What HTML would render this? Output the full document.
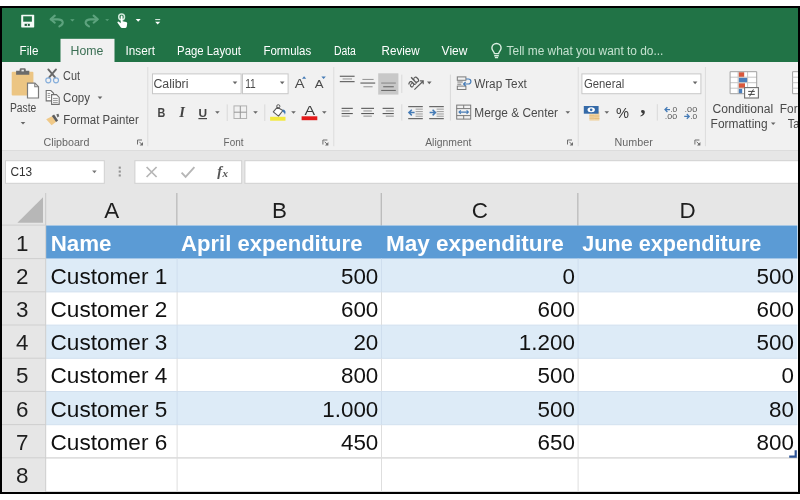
<!DOCTYPE html>
<html lang="en">
<head>
<meta charset="utf-8">
<title>Excel - customer expenditure</title>
<style>
html,body{margin:0;padding:0;width:800px;height:500px;overflow:hidden;background:#fff}
svg{display:block;position:absolute;left:0;top:0;will-change:transform}
text{font-family:"Liberation Sans", sans-serif;white-space:pre}
</style>
</head>
<body>
<svg width="800" height="500" viewBox="0 0 800 500">
<!-- title bar + tabs -->
<rect x="0" y="6" width="800" height="56" fill="#217346"/>
<rect x="60.5" y="38.8" width="54" height="24" fill="#f1f1f1"/>
<text x="19.6" y="55" font-size="12" fill="#fff" textLength="18.8" lengthAdjust="spacingAndGlyphs">File</text>
<text x="70.6" y="55" font-size="12" fill="#3b6f54" textLength="32.8" lengthAdjust="spacingAndGlyphs">Home</text>
<text x="125.6" y="55" font-size="12" fill="#fff" textLength="29.3" lengthAdjust="spacingAndGlyphs">Insert</text>
<text x="177.1" y="55" font-size="12" fill="#fff" textLength="63.8" lengthAdjust="spacingAndGlyphs">Page Layout</text>
<text x="263.4" y="55" font-size="12" fill="#fff" textLength="47.8" lengthAdjust="spacingAndGlyphs">Formulas</text>
<text x="333.9" y="55" font-size="12" fill="#fff" textLength="22.0" lengthAdjust="spacingAndGlyphs">Data</text>
<text x="381.6" y="55" font-size="12" fill="#fff" textLength="38.1" lengthAdjust="spacingAndGlyphs">Review</text>
<text x="441.6" y="55" font-size="12" fill="#fff" textLength="25.8" lengthAdjust="spacingAndGlyphs">View</text>
<text x="506.6" y="55" font-size="12" fill="#c4e1cf" textLength="156.8" lengthAdjust="spacingAndGlyphs">Tell me what you want to do...</text>
<g fill="none" stroke="#dcefe3" stroke-width="1.4"><path d="M494.4 53.6c0-1.8-2.5-2.9-2.5-5.5a4.6 4.6 0 0 1 9.2 0c0 2.6-2.5 3.7-2.5 5.5z"/><path d="M494.2 55.7h4.6M494.9 57.6h3.2"/></g>
<g><rect x="21.2" y="14.8" width="13" height="12.6" rx="0.6" fill="#f4fbf7"/><rect x="23.2" y="16.3" width="8.7" height="5.4" fill="#217346"/><rect x="24.6" y="23.8" width="5.2" height="2.1" fill="#1d5c3a"/><rect x="26.9" y="23.8" width="0.9" height="2.1" fill="#f4fbf7"/></g>
<g fill="none" stroke="#5da37e" stroke-width="2.1" stroke-linecap="round" stroke-linejoin="round"><path d="M54.8 15.6l-4.2 3.7 4.2 3.4"/><path d="M51.2 19.4h6.6c4.6 0 7.6 3.6 1.6 7"/></g>
<path d="M70.2 19.3h4.4l-2.2 2.2z" fill="#5da37e"/>
<g fill="none" stroke="#5da37e" stroke-width="2.1" stroke-linecap="round" stroke-linejoin="round"><path d="M93.6 15.6l4.2 3.7-4.2 3.4"/><path d="M97.2 19.4h-6.6c-4.6 0-7.6 3.6-1.6 7"/></g>
<path d="M105.2 19.3h4l-2 1.8z" fill="#5da37e"/>
<g fill="#fff"><circle cx="121.6" cy="16.9" r="2.9" fill="none" stroke="#cfe8d9" stroke-width="1.5"/><path d="M120.7 16.4a0.95 0.95 0 0 1 1.9 0v4.9l3.5 0.8a1.4 1.4 0 0 1 1.1 1.5l-0.5 3.2a1.3 1.3 0 0 1-1.3 1.1h-3.4a1.6 1.6 0 0 1-1.3-0.7l-3.2-4.4a0.9 0.9 0 0 1 1.4-1.1l1.8 1.6z"/></g>
<path d="M135.7 19h5l-2.5 2.7z" fill="#fff"/>
<rect x="155.2" y="19.1" width="5" height="1" fill="#e4f1ea"/>
<path d="M155.2 21.8h5l-2.5 2.7z" fill="#fff"/>
<!-- ribbon -->
<rect x="0" y="62" width="800" height="88.6" fill="#f1f1f1"/>
<rect x="0" y="150" width="800" height="1" fill="#dcdcdc"/>
<g><!-- paste -->
<rect x="11.7" y="71.7" width="21.7" height="23.8" rx="1" fill="#ecc583"/>
<path d="M16.1 74.7v-4h3.5v-1a1.4 1.4 0 0 1 1.4-1.4h3.4a1.4 1.4 0 0 1 1.4 1.4v1h3.5v4z" fill="#6b6b6b"/>
<rect x="21.5" y="69.7" width="2.4" height="1.7" fill="#e9e9e9"/>
<path d="M27.5 83.1h7.4l3.6 3.6v11.3h-11z" fill="#fff" stroke="#7a7a7a" stroke-width="1.2"/>
<path d="M34.8 83.2v3.6h3.6" fill="none" stroke="#7a7a7a" stroke-width="1.1"/>
</g>
<text x="9.9" y="112.4" font-size="12" fill="#4a4a4a" textLength="26.4" lengthAdjust="spacingAndGlyphs">Paste</text>
<path d="M20.7 122h4.6l-2.3 2.6z" fill="#666"/>
<g fill="none"><path d="M48.3 69.4l6.8 8M56 69.4l-6.8 8" stroke="#686868" stroke-width="1.9" stroke-linecap="round"/><circle cx="48.3" cy="80.3" r="2.5" stroke="#86aedb" stroke-width="1.2"/><circle cx="56" cy="80.3" r="2.5" stroke="#86aedb" stroke-width="1.2"/></g>
<text x="63.1" y="80.3" font-size="12" fill="#4a4a4a" textLength="16.9" lengthAdjust="spacingAndGlyphs">Cut</text>
<g fill="#fff" stroke="#707070" stroke-width="1.1"><path d="M46.2 90.5h4.6l2.8 2.8v7.6h-7.4z"/><path d="M51.6 94.6h4.8l2.8 2.8v7h-7.6z"/></g>
<g stroke="#8a8a8a" stroke-width="0.9"><path d="M47.6 93.4h2.6M47.6 95.4h2.6M47.6 97.4h2.6M53 98.4h4.8M53 100.4h4.8M53 102.4h4.8"/></g>
<text x="63.1" y="102.3" font-size="12" fill="#4a4a4a" textLength="26.8" lengthAdjust="spacingAndGlyphs">Copy</text>
<path d="M97.7 96.6h4.6l-2.3 2.6z" fill="#666"/>
<g><path d="M46.2 119.2l5.8-3 4.2 5.6-4.6 3.5z" fill="#f0c988"/><path d="M51.8 115.9l2.3-1.3 4 5.8-2 1.5z" fill="#5c5c5c"/><path d="M56.3 114.3l2.2-0.6 0.8 2.6-1.9 1.1z" fill="#6a6a6a"/></g>
<text x="63.2" y="124.2" font-size="12" fill="#4a4a4a" textLength="75.6" lengthAdjust="spacingAndGlyphs">Format Painter</text>
<text x="43.6" y="146" font-size="11.5" fill="#666" textLength="45.8" lengthAdjust="spacingAndGlyphs">Clipboard</text>
<g stroke="#6e6e6e" stroke-width="1" fill="none"><path d="M142 140H137.5V144.5"/><path d="M139.2 141.7L142 144.5"/><path d="M143 142.1V145.5H139.6Z" fill="#6e6e6e" stroke="none"/></g>
<rect x="147.3" y="67" width="1" height="79.2" fill="#dcdcdc"/>
<rect x="152.5" y="73.9" width="88.6" height="19.8" fill="#fff" stroke="#c8c8c8"/>
<rect x="242.5" y="73.9" width="45.6" height="19.8" fill="#fff" stroke="#c8c8c8"/>
<text x="153.4" y="88" font-size="12" fill="#4a4a4a" textLength="35.0" lengthAdjust="spacingAndGlyphs">Calibri</text>
<path d="M232.7 81.6h4.6l-2.3 2.6z" fill="#666"/>
<text x="245.2" y="88" font-size="12" fill="#4a4a4a" textLength="10.6" lengthAdjust="spacingAndGlyphs">11</text>
<path d="M279.9 81.6h4.6l-2.3 2.6z" fill="#666"/>
<text x="294.8" y="88.4" font-size="12.5" fill="#4a4a4a" textLength="9.8" lengthAdjust="spacingAndGlyphs">A</text>
<path d="M302 78.8l2.1-2.6 2.1 2.6z" fill="#457bb6"/>
<text x="314.8" y="88.4" font-size="10.5" fill="#4a4a4a" textLength="8.8" lengthAdjust="spacingAndGlyphs">A</text>
<path d="M321.4 76.4h4.4l-2.2 2.6z" fill="#457bb6"/>
<text x="157.4" y="117.3" font-size="12.5" fill="#444" font-weight="700" textLength="7.8" lengthAdjust="spacingAndGlyphs">B</text>
<text x="179.2" y="117.4" font-size="14.5" fill="#444" font-weight="700" font-style="italic" style='font-family:"Liberation Serif",serif'>I</text>
<text x="198.4" y="116.9" font-size="11.5" fill="#444" font-weight="700" textLength="8.6" lengthAdjust="spacingAndGlyphs">U</text>
<rect x="198.4" y="118" width="8.6" height="1.2" fill="#444"/>
<path d="M215.1 111.2h4.6l-2.3 2.6z" fill="#666"/>
<rect x="226.7" y="104.4" width="1" height="16.6" fill="#d9d9d9"/>
<g fill="none"><rect x="234" y="105.9" width="12.6" height="12.6" stroke="#b2b2b2" stroke-width="1"/><path d="M240.3 106v12.4M234 112.2h12.6" stroke="#969696" stroke-width="1"/></g>
<path d="M253.2 111.2h4.6l-2.3 2.6z" fill="#666"/>
<rect x="264.3" y="104.4" width="1" height="16.6" fill="#d9d9d9"/>
<g><path d="M273.3 111.8l3.9-4.5 5.7 3.2-4.4 5.7z" fill="#fff" stroke="#5a5a5a" stroke-width="1.1" stroke-linejoin="round"/><circle cx="278.3" cy="106.3" r="1.6" fill="none" stroke="#5a5a5a" stroke-width="1"/><path d="M282.9 109.6c2.6 0.4 3.4 2.6 2 5.2c-0.4-1.6-1.2-2.6-2.8-3.2z" fill="#3f78b5"/></g>
<rect x="270.1" y="116.8" width="15.4" height="3.9" fill="#f2e93c"/>
<path d="M291.2 111.2h4.6l-2.3 2.6z" fill="#666"/>
<text x="304.6" y="114.9" font-size="13" fill="#3b3b3b" textLength="10.6" lengthAdjust="spacingAndGlyphs">A</text>
<rect x="301.6" y="116.3" width="15.7" height="3.9" fill="#e31a1a"/>
<path d="M322 111.2h4.6l-2.3 2.6z" fill="#666"/>
<text x="223.6" y="146" font-size="11.5" fill="#666" textLength="19.8" lengthAdjust="spacingAndGlyphs">Font</text>
<g stroke="#6e6e6e" stroke-width="1" fill="none"><path d="M327.4 140H322.9V144.5"/><path d="M324.6 141.7L327.4 144.5"/><path d="M328.4 142.1V145.5H325Z" fill="#6e6e6e" stroke="none"/></g>
<rect x="333.3" y="67" width="1" height="79.2" fill="#dcdcdc"/>
<rect x="339.8" y="75.7" width="14.8" height="1.1" fill="#5a5a5a"/>
<rect x="342.6" y="78.4" width="9.4" height="1.1" fill="#9a9a9a"/>
<rect x="339.8" y="81.1" width="14.8" height="1.1" fill="#5a5a5a"/>
<rect x="362.4" y="78.9" width="11.2" height="1.1" fill="#9a9a9a"/>
<rect x="360.4" y="82.5" width="14.8" height="1.1" fill="#5a5a5a"/>
<rect x="363.4" y="86.2" width="9.2" height="1.1" fill="#9a9a9a"/>
<rect x="378.2" y="73.3" width="20.2" height="21.3" fill="#c8c8c8"/>
<rect x="381.2" y="82.5" width="14.6" height="1.1" fill="#8a8a8a"/>
<rect x="383.2" y="86.2" width="10.6" height="1.1" fill="#6a6a6a"/>
<rect x="381.2" y="89.9" width="14.6" height="1.1" fill="#6a6a6a"/>
<rect x="401.3" y="74.6" width="1" height="18.4" fill="#d9d9d9"/>
<g transform="rotate(-43 416 82.4)"><text x="408.6" y="83.4" font-size="11" fill="#505050" stroke="#505050" stroke-width="0.25">ab</text></g>
<path d="M414.4 89.6l8.6-8.4M419.8 80.9h3.4v3.4" fill="none" stroke="#5e5e5e" stroke-width="1.2"/>
<path d="M427 81.6h4.6l-2.3 2.6z" fill="#666"/>
<rect x="341.6" y="107.8" width="11.2" height="1.1" fill="#5a5a5a"/>
<rect x="361.2" y="107.8" width="12.8" height="1.1" fill="#5a5a5a"/>
<rect x="382.6" y="107.8" width="11.2" height="1.1" fill="#5a5a5a"/>
<rect x="341.6" y="110.4" width="8" height="1.1" fill="#9a9a9a"/>
<rect x="363.4" y="110.4" width="8.4" height="1.1" fill="#9a9a9a"/>
<rect x="385.8" y="110.4" width="8" height="1.1" fill="#9a9a9a"/>
<rect x="341.6" y="113" width="11.2" height="1.1" fill="#5a5a5a"/>
<rect x="361.2" y="113" width="12.8" height="1.1" fill="#5a5a5a"/>
<rect x="382.6" y="113" width="11.2" height="1.1" fill="#5a5a5a"/>
<rect x="341.6" y="115.6" width="8" height="1.1" fill="#9a9a9a"/>
<rect x="363.4" y="115.6" width="8.4" height="1.1" fill="#9a9a9a"/>
<rect x="385.8" y="115.6" width="8" height="1.1" fill="#9a9a9a"/>
<rect x="401.3" y="104.2" width="1" height="16.4" fill="#d9d9d9"/>
<rect x="408.2" y="106.1" width="14.6" height="1.1" fill="#5a5a5a"/>
<rect x="408.2" y="118.1" width="14.6" height="1.1" fill="#5a5a5a"/>
<rect x="415.6" y="108.6" width="7.2" height="1.1" fill="#a4a4a4"/>
<rect x="415.6" y="111" width="7.2" height="1.1" fill="#a4a4a4"/>
<rect x="415.6" y="113.4" width="7.2" height="1.1" fill="#a4a4a4"/>
<rect x="415.6" y="115.7" width="7.2" height="1.1" fill="#a4a4a4"/>
<path d="M414.6 112.6h-5.6M411.8 109.8l-2.9 2.8 2.9 2.8" fill="none" stroke="#457bb6" stroke-width="1.5"/>
<rect x="429.2" y="106.1" width="14.6" height="1.1" fill="#5a5a5a"/>
<rect x="429.2" y="118.1" width="14.6" height="1.1" fill="#5a5a5a"/>
<rect x="436.6" y="108.6" width="7.2" height="1.1" fill="#a4a4a4"/>
<rect x="436.6" y="111" width="7.2" height="1.1" fill="#a4a4a4"/>
<rect x="436.6" y="113.4" width="7.2" height="1.1" fill="#a4a4a4"/>
<rect x="436.6" y="115.7" width="7.2" height="1.1" fill="#a4a4a4"/>
<path d="M429.6 112.6h5.6M432.6 109.8l2.9 2.8-2.9 2.8" fill="none" stroke="#457bb6" stroke-width="1.5"/>
<rect x="449.9" y="74.6" width="1" height="46" fill="#d9d9d9"/>
<g fill="none" stroke="#7a7a7a" stroke-width="1"><rect x="457.3" y="76.9" width="8.6" height="3.4"/><rect x="457.3" y="86.1" width="8.6" height="3.4"/><path d="M457.3 82h5.4M457.3 84.2h4"/></g>
<path d="M466 79h2.4a2.4 2.4 0 0 1 0 5h-4.6M465.6 82l-2 2 2 2" fill="none" stroke="#457bb6" stroke-width="1.2"/>
<text x="474.3" y="87.9" font-size="12" fill="#4a4a4a" textLength="52.5" lengthAdjust="spacingAndGlyphs">Wrap Text</text>
<g fill="none" stroke="#7a7a7a" stroke-width="1"><rect x="456.7" y="105.1" width="14" height="14"/><path d="M456.7 108.6h14M456.7 115.6h14M463.7 105.1v3.5M463.7 115.6v3.5"/></g>
<path d="M459 112.1h9.4M460.8 110.3l-1.8 1.8 1.8 1.8M466.6 110.3l1.8 1.8-1.8 1.8" fill="none" stroke="#457bb6" stroke-width="1.1"/>
<text x="474.3" y="116.8" font-size="12" fill="#4a4a4a" textLength="83.7" lengthAdjust="spacingAndGlyphs">Merge &amp; Center</text>
<path d="M565.5 111.2h4.6l-2.3 2.6z" fill="#666"/>
<text x="425.2" y="146" font-size="11.5" fill="#666" textLength="46.2" lengthAdjust="spacingAndGlyphs">Alignment</text>
<g stroke="#6e6e6e" stroke-width="1" fill="none"><path d="M572 140H567.5V144.5"/><path d="M569.2 141.7L572 144.5"/><path d="M573 142.1V145.5H569.6Z" fill="#6e6e6e" stroke="none"/></g>
<rect x="577.7" y="67" width="1" height="79.2" fill="#dcdcdc"/>
<rect x="581.9" y="73.9" width="119" height="19.8" fill="#fff" stroke="#c8c8c8"/>
<text x="584.0" y="88" font-size="12" fill="#4a4a4a" textLength="40.2" lengthAdjust="spacingAndGlyphs">General</text>
<path d="M692.8 81.6h4.6l-2.3 2.6z" fill="#666"/>
<g><rect x="589.4" y="113.4" width="5" height="7.2" fill="#efd3a2"/><rect x="594.2" y="111.4" width="5.2" height="9.2" fill="#efd3a2"/><path d="M589.4 115.8h5M589.4 118.2h5M594.2 116h5.2M594.2 118.4h5.2" stroke="#e3ba78" stroke-width="0.9"/><rect x="583.8" y="106" width="14.8" height="7.7" fill="#356aa8"/><ellipse cx="591.2" cy="109.85" rx="3.7" ry="2.5" fill="#fff"/><circle cx="591.2" cy="109.85" r="1.3" fill="#356aa8"/></g>
<path d="M604.5 111.2h4.6l-2.3 2.6z" fill="#666"/>
<text x="616.0" y="118" font-size="15.5" fill="#3b3b3b" textLength="13.0" lengthAdjust="spacingAndGlyphs">%</text>
<text x="640.2" y="113" font-size="21.5" fill="#3b3b3b" font-weight="700" style='font-family:"Liberation Serif",serif' textLength="5.4" lengthAdjust="spacingAndGlyphs">,</text>
<rect x="656.8" y="104.2" width="1" height="16.4" fill="#d9d9d9"/>
<path d="M665 109.6h5M667.4 107.2l-2.4 2.4 2.4 2.4" fill="none" stroke="#457bb6" stroke-width="1.3"/>
<text x="670.2" y="112.2" font-size="7.5" fill="#555" textLength="7.0" lengthAdjust="spacingAndGlyphs">.0</text>
<text x="664.8" y="119" font-size="7.5" fill="#555" textLength="12.4" lengthAdjust="spacingAndGlyphs">.00</text>
<text x="684.6" y="112.2" font-size="7.5" fill="#555" textLength="12.6" lengthAdjust="spacingAndGlyphs">.00</text>
<path d="M684.2 116.4h5M686.8 114l2.4 2.4-2.4 2.4" fill="none" stroke="#457bb6" stroke-width="1.3"/>
<text x="690.2" y="119" font-size="7.5" fill="#555" textLength="7.0" lengthAdjust="spacingAndGlyphs">.0</text>
<text x="614.6" y="146" font-size="11.5" fill="#666" textLength="38.2" lengthAdjust="spacingAndGlyphs">Number</text>
<g stroke="#6e6e6e" stroke-width="1" fill="none"><path d="M699.4 140H694.9V144.5"/><path d="M696.6 141.7L699.4 144.5"/><path d="M700.4 142.1V145.5H697Z" fill="#6e6e6e" stroke="none"/></g>
<rect x="704.9" y="67" width="1" height="79.2" fill="#dcdcdc"/>
<g><rect x="730.1" y="71.7" width="26.6" height="22" fill="#fff"/>
<rect x="738.6" y="72.2" width="5.6" height="5" fill="#d8573c"/><rect x="738.6" y="77.7" width="9" height="5" fill="#4a7ebb"/><rect x="738.6" y="83.2" width="6.4" height="5" fill="#d8573c"/><rect x="738.6" y="88.7" width="3.6" height="5" fill="#4a7ebb"/>
<path d="M730.1 77.2h26.6M730.1 82.7h26.6M730.1 88.2h26.6M738.1 71.7v22M747.6 71.7v22" fill="none" stroke="#c6c6c6" stroke-width="1"/><path d="M730.1 71.7h26.6v22h-26.6z" fill="none" stroke="#a0a0a0" stroke-width="1"/>
<rect x="744.6" y="87.6" width="13.8" height="10.4" fill="#fff" stroke="#6e6e6e" stroke-width="1.1"/>
<path d="M748.2 91.4h6.6M748.2 94.4h6.6M753.4 89.4l-3.8 7" fill="none" stroke="#444" stroke-width="1"/></g>
<text x="712.6" y="112.6" font-size="12" fill="#4a4a4a" textLength="60.6" lengthAdjust="spacingAndGlyphs">Conditional</text>
<text x="710.6" y="128.2" font-size="12" fill="#4a4a4a" textLength="57.0" lengthAdjust="spacingAndGlyphs">Formatting</text>
<path d="M770.9 122.4h4.6l-2.3 2.6z" fill="#666"/>
<text x="779.8" y="112.6" font-size="12" fill="#4a4a4a" textLength="37.6" lengthAdjust="spacingAndGlyphs">Format</text>
<text x="787.8" y="128.2" font-size="12" fill="#4a4a4a" textLength="26.6" lengthAdjust="spacingAndGlyphs">Table</text>
<path d="M792.6 71.7h10v22h-10z" fill="#fff" stroke="#a0a0a0" stroke-width="1"/><path d="M792.6 77.2h10M792.6 82.7h10M792.6 88.2h10" fill="none" stroke="#c6c6c6" stroke-width="1"/>
<!-- formula bar -->
<rect x="0" y="151" width="800" height="75" fill="#e6e6e6"/>
<rect x="5.5" y="160.7" width="98.8" height="22.6" fill="#fff" stroke="#d0d0d0"/>
<text x="10.4" y="176.4" font-size="12" fill="#333" textLength="21.8" lengthAdjust="spacingAndGlyphs">C13</text>
<path d="M92.1 170.6h4.6l-2.3 2.6z" fill="#777"/>
<rect x="118.7" y="166.6" width="2.1" height="2.1" fill="#939393"/>
<rect x="118.7" y="170.5" width="2.1" height="2.1" fill="#939393"/>
<rect x="118.7" y="174.4" width="2.1" height="2.1" fill="#939393"/>
<rect x="134.9" y="160.7" width="106.8" height="22.6" fill="#fff" stroke="#d0d0d0"/>
<path d="M146.6 167l10 10M156.6 167l-10 10" stroke="#b6b6b6" stroke-width="1.7" fill="none"/>
<path d="M181.6 172.6l4 4.2 8.8-9.6" stroke="#b6b6b6" stroke-width="1.9" fill="none"/>
<text x="217.2" y="176.4" font-size="14.5" fill="#555" font-weight="700" font-style="italic" style='font-family:"Liberation Serif",serif'>f</text>
<text x="222.6" y="176.6" font-size="11" fill="#555" font-weight="700" font-style="italic" style='font-family:"Liberation Serif",serif'>x</text>
<rect x="244.9" y="160.7" width="554.6" height="22.6" fill="#fff" stroke="#d0d0d0"/>
<!-- grid -->
<rect x="46" y="225.5" width="752" height="267" fill="#fff"/>
<rect x="0" y="225.5" width="46" height="267" fill="#e6e6e6"/>
<path d="M43 197.2V222.8H17.4Z" fill="#b7b7b7"/>
<rect x="45.2" y="193" width="1" height="32.5" fill="#c9c9c9"/>
<text x="111.6" text-anchor="middle" y="218.2" font-size="22.4" fill="#1e1e1e">A</text>
<rect x="176.3" y="193" width="1.1" height="32.5" fill="#b2b2b2"/>
<text x="279.4" text-anchor="middle" y="218.2" font-size="22.4" fill="#1e1e1e">B</text>
<rect x="380.7" y="193" width="1.1" height="32.5" fill="#b2b2b2"/>
<text x="479.9" text-anchor="middle" y="218.2" font-size="22.4" fill="#1e1e1e">C</text>
<rect x="577.3" y="193" width="1.1" height="32.5" fill="#b2b2b2"/>
<text x="687.7" text-anchor="middle" y="218.2" font-size="22.4" fill="#1e1e1e">D</text>
<rect x="2" y="224.6" width="44" height="1" fill="#cfcfcf"/>
<rect x="46" y="225.5" width="751.4" height="33.2" fill="#5b9bd5"/>
<text x="22.2" text-anchor="middle" y="250.6" font-size="22.4" fill="#1e1e1e">1</text>
<text x="50.7" y="250.6" font-size="22.4" fill="#fff" font-weight="700" textLength="60.8" lengthAdjust="spacingAndGlyphs">Name</text>
<text x="181.1" y="250.6" font-size="22.4" fill="#fff" font-weight="700" textLength="181.3" lengthAdjust="spacingAndGlyphs">April expenditure</text>
<text x="385.9" y="250.6" font-size="22.4" fill="#fff" font-weight="700" textLength="177.9" lengthAdjust="spacingAndGlyphs">May expenditure</text>
<text x="582.3" y="250.6" font-size="22.4" fill="#fff" font-weight="700" textLength="179.1" lengthAdjust="spacingAndGlyphs">June expenditure</text>
<rect x="46" y="258.7" width="751.4" height="33.2" fill="#ddebf7"/>
<rect x="2" y="258.1" width="44" height="1" fill="#cfcfcf"/>
<text x="22.2" text-anchor="middle" y="283.8" font-size="22.4" fill="#1e1e1e">2</text>
<text x="50.5" y="283.8" font-size="22.4" fill="#111" textLength="116.8" lengthAdjust="spacingAndGlyphs">Customer 1</text>
<text x="378.3" text-anchor="end" y="283.8" font-size="22.4" fill="#111">500</text>
<text x="574.9" text-anchor="end" y="283.8" font-size="22.4" fill="#111">0</text>
<text x="793.9" text-anchor="end" y="283.8" font-size="22.4" fill="#111">500</text>
<rect x="2" y="291.3" width="44" height="1" fill="#cfcfcf"/>
<text x="22.2" text-anchor="middle" y="317" font-size="22.4" fill="#1e1e1e">3</text>
<text x="50.5" y="317" font-size="22.4" fill="#111" textLength="116.8" lengthAdjust="spacingAndGlyphs">Customer 2</text>
<text x="378.3" text-anchor="end" y="317" font-size="22.4" fill="#111">600</text>
<text x="574.9" text-anchor="end" y="317" font-size="22.4" fill="#111">600</text>
<text x="793.9" text-anchor="end" y="317" font-size="22.4" fill="#111">600</text>
<rect x="46" y="325.1" width="751.4" height="33.2" fill="#ddebf7"/>
<rect x="2" y="324.5" width="44" height="1" fill="#cfcfcf"/>
<text x="22.2" text-anchor="middle" y="350.2" font-size="22.4" fill="#1e1e1e">4</text>
<text x="50.5" y="350.2" font-size="22.4" fill="#111" textLength="116.8" lengthAdjust="spacingAndGlyphs">Customer 3</text>
<text x="378.3" text-anchor="end" y="350.2" font-size="22.4" fill="#111">20</text>
<text x="574.9" text-anchor="end" y="350.2" font-size="22.4" fill="#111">1.200</text>
<text x="793.9" text-anchor="end" y="350.2" font-size="22.4" fill="#111">500</text>
<rect x="2" y="357.7" width="44" height="1" fill="#cfcfcf"/>
<text x="22.2" text-anchor="middle" y="383.4" font-size="22.4" fill="#1e1e1e">5</text>
<text x="50.5" y="383.4" font-size="22.4" fill="#111" textLength="116.8" lengthAdjust="spacingAndGlyphs">Customer 4</text>
<text x="378.3" text-anchor="end" y="383.4" font-size="22.4" fill="#111">800</text>
<text x="574.9" text-anchor="end" y="383.4" font-size="22.4" fill="#111">500</text>
<text x="793.9" text-anchor="end" y="383.4" font-size="22.4" fill="#111">0</text>
<rect x="46" y="391.5" width="751.4" height="33.2" fill="#ddebf7"/>
<rect x="2" y="390.9" width="44" height="1" fill="#cfcfcf"/>
<text x="22.2" text-anchor="middle" y="416.6" font-size="22.4" fill="#1e1e1e">6</text>
<text x="50.5" y="416.6" font-size="22.4" fill="#111" textLength="116.8" lengthAdjust="spacingAndGlyphs">Customer 5</text>
<text x="378.3" text-anchor="end" y="416.6" font-size="22.4" fill="#111">1.000</text>
<text x="574.9" text-anchor="end" y="416.6" font-size="22.4" fill="#111">500</text>
<text x="793.9" text-anchor="end" y="416.6" font-size="22.4" fill="#111">80</text>
<rect x="2" y="424.1" width="44" height="1" fill="#cfcfcf"/>
<text x="22.2" text-anchor="middle" y="449.8" font-size="22.4" fill="#1e1e1e">7</text>
<text x="50.5" y="449.8" font-size="22.4" fill="#111" textLength="116.8" lengthAdjust="spacingAndGlyphs">Customer 6</text>
<text x="378.3" text-anchor="end" y="449.8" font-size="22.4" fill="#111">450</text>
<text x="574.9" text-anchor="end" y="449.8" font-size="22.4" fill="#111">650</text>
<text x="793.9" text-anchor="end" y="449.8" font-size="22.4" fill="#111">800</text>
<rect x="2" y="457.3" width="44" height="1" fill="#cfcfcf"/>
<text x="22.2" text-anchor="middle" y="483" font-size="22.4" fill="#1e1e1e">8</text>
<rect x="46" y="291.4" width="751.4" height="1" fill="#d2e0ef"/>
<rect x="46" y="324.6" width="751.4" height="1" fill="#d2e0ef"/>
<rect x="46" y="357.8" width="751.4" height="1" fill="#d2e0ef"/>
<rect x="46" y="391" width="751.4" height="1" fill="#d2e0ef"/>
<rect x="46" y="424.2" width="751.4" height="1" fill="#d2e0ef"/>
<rect x="46" y="457.4" width="751.4" height="1" fill="#d9d9d9"/>
<rect x="46" y="457.4" width="751.4" height="1" fill="#d9d9d9"/>
<rect x="46" y="491.1" width="751.4" height="1" fill="#d9d9d9"/>
<rect x="176.6" y="258.7" width="1" height="33.2" fill="#cfdeee"/>
<rect x="176.6" y="291.9" width="1" height="33.2" fill="#dedede"/>
<rect x="176.6" y="325.1" width="1" height="33.2" fill="#cfdeee"/>
<rect x="176.6" y="358.3" width="1" height="33.2" fill="#dedede"/>
<rect x="176.6" y="391.5" width="1" height="33.2" fill="#cfdeee"/>
<rect x="176.6" y="424.7" width="1" height="33.2" fill="#dedede"/>
<rect x="176.6" y="457.9" width="1" height="33.7" fill="#dedede"/>
<rect x="381" y="258.7" width="1" height="33.2" fill="#cfdeee"/>
<rect x="381" y="291.9" width="1" height="33.2" fill="#dedede"/>
<rect x="381" y="325.1" width="1" height="33.2" fill="#cfdeee"/>
<rect x="381" y="358.3" width="1" height="33.2" fill="#dedede"/>
<rect x="381" y="391.5" width="1" height="33.2" fill="#cfdeee"/>
<rect x="381" y="424.7" width="1" height="33.2" fill="#dedede"/>
<rect x="381" y="457.9" width="1" height="33.7" fill="#dedede"/>
<rect x="577.6" y="258.7" width="1" height="33.2" fill="#cfdeee"/>
<rect x="577.6" y="291.9" width="1" height="33.2" fill="#dedede"/>
<rect x="577.6" y="325.1" width="1" height="33.2" fill="#cfdeee"/>
<rect x="577.6" y="358.3" width="1" height="33.2" fill="#dedede"/>
<rect x="577.6" y="391.5" width="1" height="33.2" fill="#cfdeee"/>
<rect x="577.6" y="424.7" width="1" height="33.2" fill="#dedede"/>
<rect x="577.6" y="457.9" width="1" height="33.7" fill="#dedede"/>
<rect x="45.2" y="225.5" width="1" height="267" fill="#cfcfcf"/>
<path d="M794.6 450.2h2.2v7.6h-7.6v-2.4h5.4z" fill="#2f5597"/>
<!-- window frame -->
<path d="M0 6H800V494H0Z M2 8V492H798V8Z" fill="#000" fill-rule="evenodd"/>
</svg>
</body>
</html>
